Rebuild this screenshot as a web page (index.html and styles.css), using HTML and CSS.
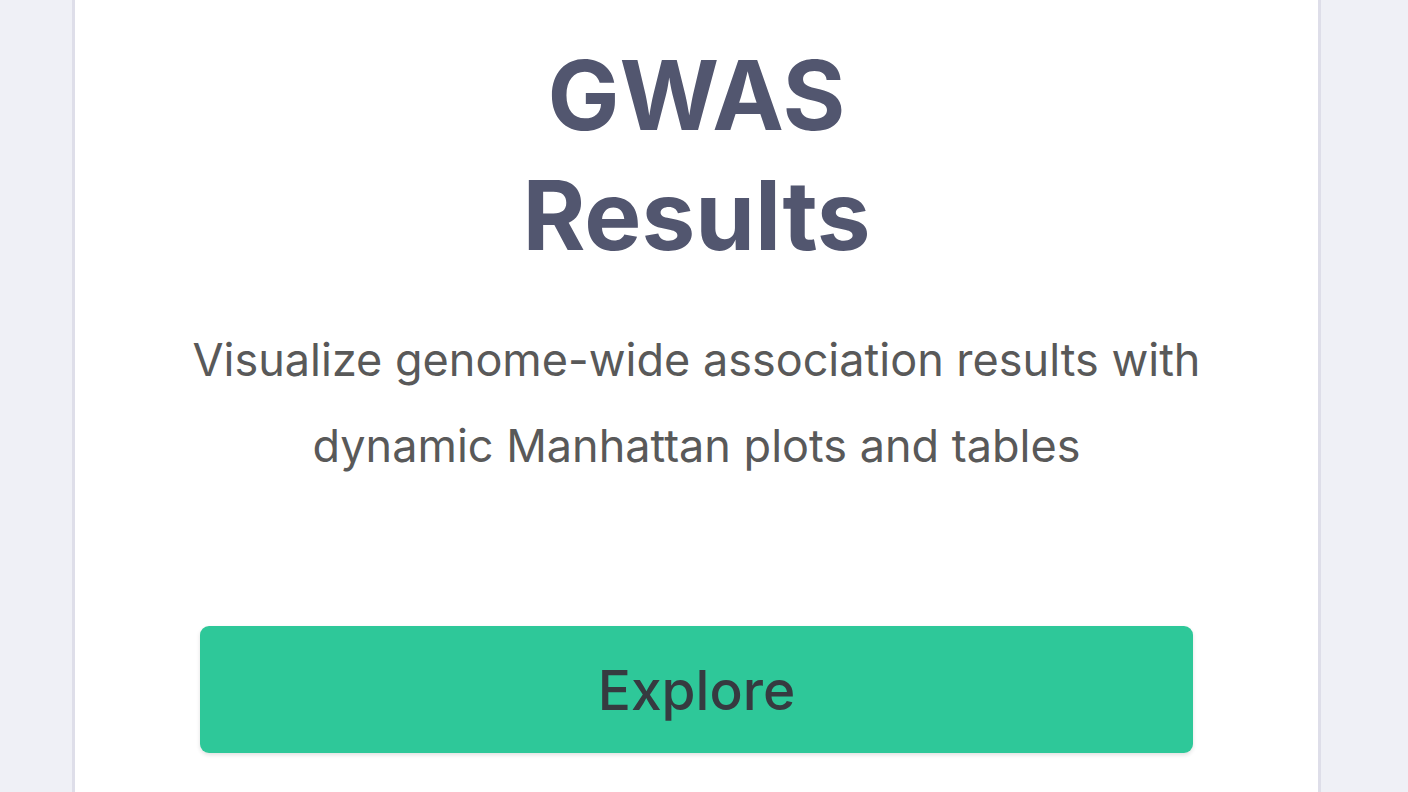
FILE: index.html
```html
<!DOCTYPE html>
<html lang="en">
<head>
<meta charset="utf-8">
<title>GWAS Results</title>
<link rel="stylesheet" href="styles.css">
</head>
<body>
<main class="page">
  <section class="card">
    <h1 class="card-title">GWAS<br>Results</h1>
    <p class="card-text">Visualize genome-wide association results with dynamic Manhattan plots and tables</p>
    <a class="btn" href="#">Explore</a>
  </section>
</main>
</body>
</html>
```

FILE: styles.css
```css
html, body {
  margin: 0;
  padding: 0;
  height: 100%;
  background: #eff0f6;
  overflow: hidden;
}

.page {
  display: flex;
  height: 792px;
  padding: 0 87px 0 72px;
  box-sizing: border-box;
}

.card {
  flex: 1;
  background: #ffffff;
  border-left: 3px solid #dedee9;
  border-right: 3px solid #dedee9;
  display: flex;
  flex-direction: column;
  align-items: center;
  padding: 35px 125px 0 125px;
  box-sizing: border-box;
  font-family: Inter, "Liberation Sans", sans-serif;
}

.card-title {
  margin: 0;
  font-size: 96px;
  line-height: 120px;
  font-weight: 700;
  color: #52566f;
  text-align: center;
}

.card-text {
  margin: 42px -20px 0 -20px;
  font-size: 45px;
  line-height: 86px;
  font-weight: 400;
  color: #595959;
  text-align: center;
}

.btn {
  margin-top: 137px;
  align-self: stretch;
  height: 127px;
  display: flex;
  align-items: center;
  justify-content: center;
  background: #2ec899;
  border-radius: 9px;
  box-shadow: 0 2px 4px rgba(0, 0, 0, 0.12);
  color: #363a40;
  font-size: 55px;
  font-weight: 500;
  text-decoration: none;
}
```
